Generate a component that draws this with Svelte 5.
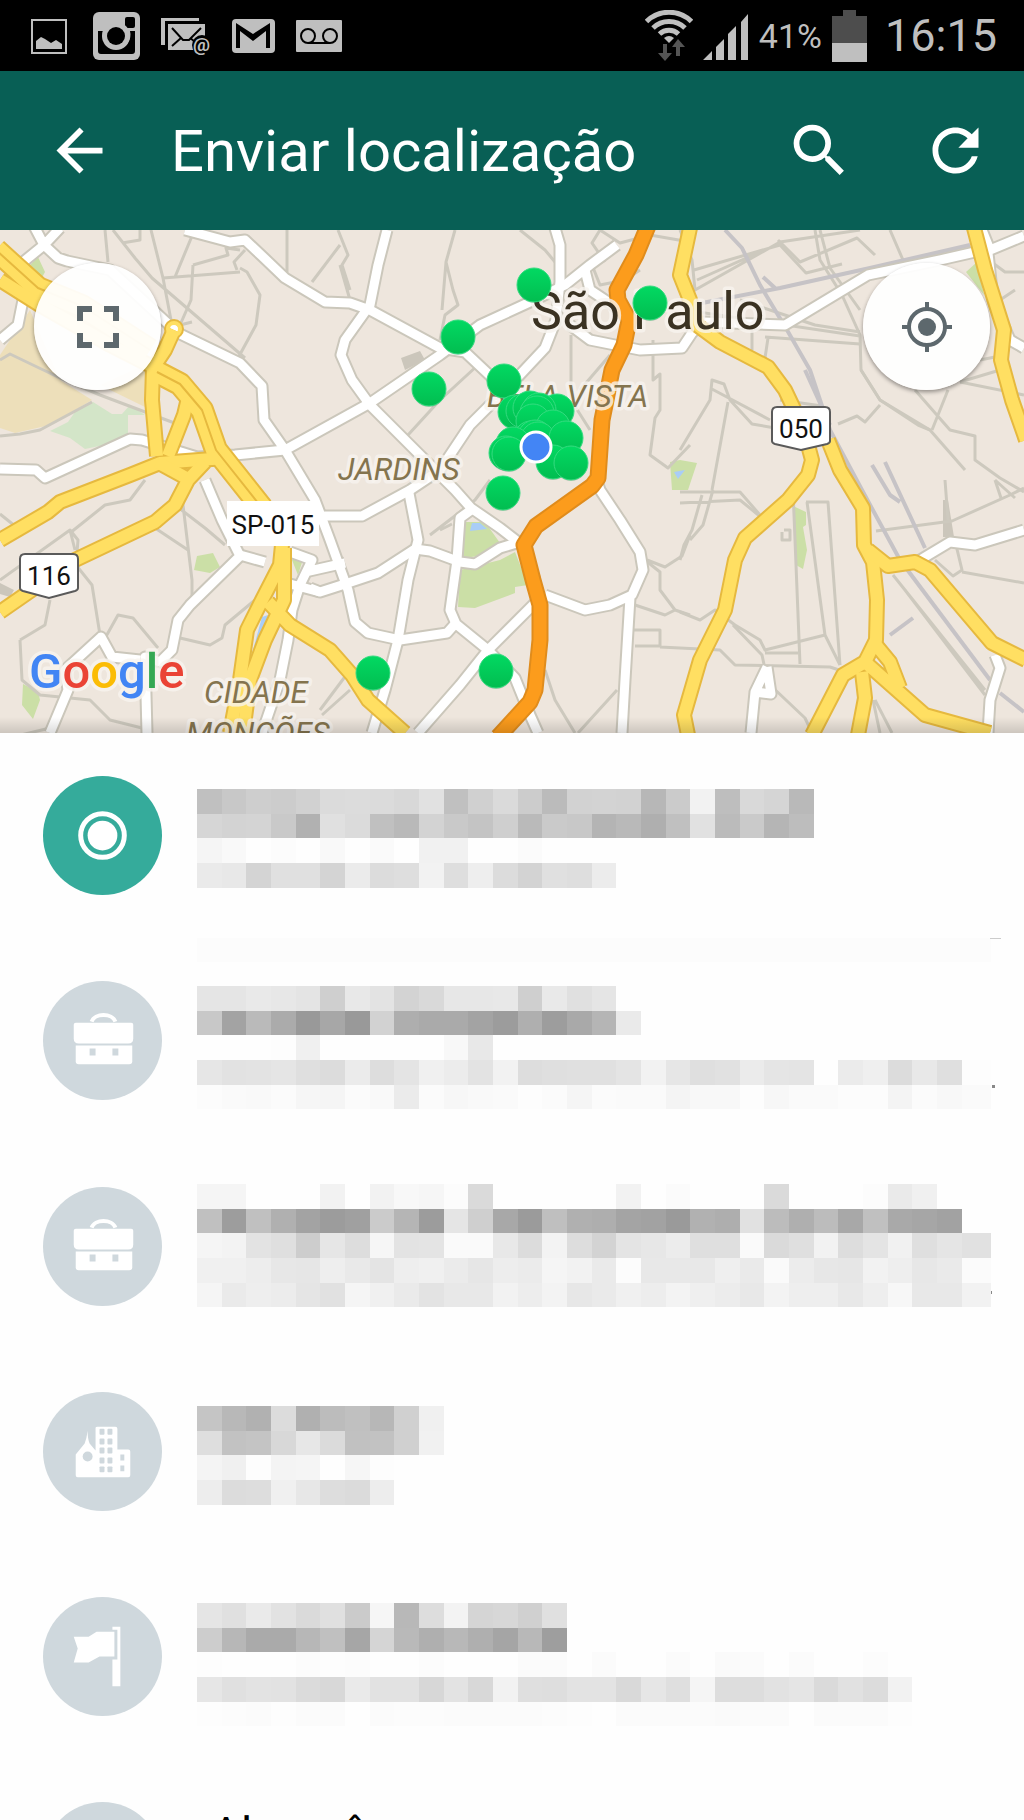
<script lang="ts">
  const CELL = 24.64;

  const minor = [
    "M105 230L108 262M113 230L135 258L152 278L245 358M122 243L140 240V230M151 230L163 278L171 320",
    "M192 236L175 277M163 278L240 272M193 265L228 255L226 248L240 250M193 265L191 300L180 325",
    "M240 268L247 272L260 295L256 325L238 358M245 250L234 262L237 270M180 325L192 322M287 230V272",
    "M338 230L348 255L342 265L350 290M312 282L340 245M340 265L350 300",
    "M455 230L446 262L453 290L458 305L445 315L440 340M446 262L442 310",
    "M478 365L440 400L408 435M340 515L300 535",
    "M520 230L545 250L555 262M600 230L620 243L650 235L690 242",
    "M590 260L600 285L625 280L640 270M600 230L592 243L605 262",
    "M571 335V400L590 430M610 355L580 390M653 340V380L660 374V410L655 418L650 455L668 468L690 445",
    "M680 230L692 260L695 290L780 242L820 236L860 230M694 270L780 245L806 273L842 264M697 280L760 252",
    "M778 240L800 262L857 238L875 255M815 230L820 260L842 295L860 335L861 370L880 400L930 430L965 470",
    "M698 312L860 336M752 330V350M765 337L860 344M768 338L765 358",
    "M820 230L830 268L860 310M890 230L903 260M740 300L815 325L860 332",
    "M680 450L710 400L712 380L724 384L730 400L752 424L775 428M710 388L770 420M728 402L712 490",
    "M780 400L822 406M838 424L857 416L865 422L880 405M861 370L880 400L918 425L930 430M960 382L1024 395",
    "M915 390L950 430L975 436V460L1000 478L1024 492M948 390L932 430M975 436V460",
    "M986 258L1005 272L1024 272M1015 290L1000 300M960 382L1000 370M980 360L1005 355",
    "M0 514L20 530M0 580L70 530L75 550M70 530L78 540L76 565L92 585L100 635",
    "M70 533L105 505L130 500L145 480M180 480L192 580L192 600M175 505L205 528L225 545M155 528L188 550",
    "M20 640L45 625L50 600M20 640L22 680L40 695L90 700L110 720L150 730",
    "M104 640L118 615L133 618L158 648M180 638L210 645L222 638L225 625L255 600M0 740L50 728",
    "M430 535L460 512L475 500L490 480M440 530L452 524",
    "M545 670L555 700L575 733M578 733L617 690M647 560L665 567L682 556L690 535M645 560L660 572V590L675 610L690 615M635 605L665 615L675 610",
    "M633 630H660V646H635M660 647L720 650L735 665L830 667L845 672M680 492L740 492L760 515",
    "M680 503L740 500L762 518M702 495L692 530L684 545L680 560M713 490L703 525L690 540M793 490L800 664",
    "M806 502H828L840 665M807 502L825 635L840 665M784 530H790V540H782V532",
    "M680 612L700 620L715 610L735 625L760 640L765 650L825 635M733 625L762 655L768 683L805 718L812 733M765 653H798",
    "M876 531L952 521L1010 495L1024 488M945 480L948 520M995 480L1001 498M995 480L1015 498M935 560L953 576L962 570L956 545",
    "M962 572L1024 583M905 590L985 695M893 575L985 690M873 700L880 733M875 700L892 733M320 710L350 670M322 715L350 690",
  ];

  const rails = [
    "M725 230L742 248L760 285L787 330L810 370L830 430L862 490L900 560L990 680",
    "M697 304L780 288L870 268L970 245M763 277L775 288M805 370L830 425",
    "M872 465L890 495L900 502M885 462L925 548M890 635L913 618M1000 693L1024 712",
  ];

  const streets = [
    "M34 226L44 245L60 228M44 245L58 258L67 261L110 270L165 321L178 333L240 363L262 386L264 420L285 450L315 500L330 540L348 590L355 622L368 633L400 640L447 633L455 624",
    "M44 245L17 267L23 300L18 325L0 340",
    "M185 230L230 242L245 240L262 256L285 278L325 302L350 303L370 310L440 348L465 352L500 385",
    "M387 230L378 265L370 305L345 340L341 355L352 380L370 405L455 490L471 508L500 528L522 545",
    "M0 469L36 470L45 478L130 439L142 440L197 457L235 455L285 450L370 403L440 355L480 325L530 302L565 285L590 265L617 245",
    "M555 228L560 245V282L556 320L545 348L515 380L470 425L440 470L410 490L362 516H325L315 522",
    "M585 270L590 290L620 310M570 325L590 340L640 350L682 348L692 333L703 322L785 325L868 275L940 260L975 252",
    "M1024 236L990 250L982 230M988 253L993 300L1010 340L1024 348",
    "M408 488L418 540L408 580L398 640L385 690L372 733",
    "M310 588L320 592L345 584L378 573L415 549L430 551L460 562L475 564L500 548L520 542",
    "M471 510L460 518L457 560L450 610L456 624L488 650L515 678L530 715L538 733",
    "M538 600L488 650L460 685L418 733M522 545L535 580",
    "M545 595L585 610L610 605L632 595L643 570L640 552L620 520L600 490L595 475M630 597L625 680L622 733",
    "M205 480L222 520L240 556L190 605L178 620L172 650L160 662L145 657L147 733M140 660L112 657L101 637L65 670L68 690L50 733",
    "M240 555L265 562M290 552L312 560L300 585L292 610L288 640L280 680L262 733M305 572L345 563M275 580L320 592",
    "M920 560L950 542L975 545L1024 530M767 667L755 692L751 733M767 667L771 694L755 692M995 655L1000 668L990 700L988 733",
  ];

  const trunks = [
    "M-4 250L38 288L82 306L150 350",
    "M157 372L180 384L202 410L216 450L262 508",
  ];

  const highways = [
    "M0 280L38 304L110 345L155 368L180 380",
    "M174 330L165 350L153 368L152 400L157 456",
    "M188 398L184 415L168 456",
    "M225 458L160 463L130 475L60 502L48 512L0 540",
    "M157 462L190 480M205 462L188 480L175 505L155 522L75 560L0 612",
    "M282 545L280 565L262 600L247 630L240 680L230 733",
    "M284 548L284 600L265 640L250 680L243 733M268 602L290 625L330 650L352 675L368 700L405 733",
    "M690 228L680 275L690 300L697 325L720 342L768 367L785 390L804 430L812 460L808 475L788 500L745 538L735 560L725 610L700 660L684 715L688 735",
    "M828 440L840 470L863 508L864 545L873 562L877 600L876 640L865 662L843 675L812 735",
    "M868 550L888 566L915 562L930 570L992 643L1026 660",
    "M876 645L890 662L900 688M865 662L925 715L990 733M862 672L865 698L858 735",
    "M974 228L985 270L1004 330L1001 360L1012 400L1026 440",
  ];

  const orange =
    "M648 226L636 255L617 290L618 300L629 320L624 345L612 370L602 420L598 478L592 486L536 526L524 545L533 580L540 605L540 640L535 690L530 702L498 737";

  const pins = [
    [534, 285], [650, 303], [458, 337], [429, 389], [504, 381],
    [503, 493], [373, 673], [496, 671],
    [515, 412], [523, 411], [530, 408], [557, 411], [539, 410], [537, 413], [533, 421],
    [553, 427], [531, 438], [535, 437], [538, 439], [566, 438], [513, 444],
    [506, 453], [509, 454], [553, 462], [571, 463],
  ];

  const windows = [-23, -13, -4, 6, 15];

  // Each row of the preview is a list of grey levels, one per block
  const places = [
    {
      icon: "current",
      top: 56,
      rows: [
        "c0 c8 ce cc d1 db dc db d8 e1 c0 d0 da cc bb d2 d3 d2 b7 cb f2 be d9 d5 b9",
        "d6 d3 d4 c9 b1 e0 db c0 b9 d3 c9 c4 cf ba ca c8 b4 b9 af c0 e1 bb ca b5 bd",
        "f5 f9 fe fc fe f9 fe fa fe f1 f1 fe fe fb",
        "ea e8 d4 e0 e0 d4 eb dc de f2 de ee dc d3 e0 de ec",
      ],
    },
    {
      icon: "case",
      top: 48,
      rows: [
        "e5 e5 e9 e7 e4 cf e8 e3 d3 d9 e7 e7 e8 cf e9 e0 e5",
        "c8 a3 ba ab 99 a7 99 d2 ae aa aa a3 9c af 9d a9 b5 ea",
        "fe fe fe fd f0 fe fe fe fe fe f8 e8 fe",
        "e6 e2 e3 e5 df dc eb dd e4 f0 ec e3 f2 dd df e0 e0 e4 f2 e6 df e1 eb e5 e4 fe eb ef dc e8 df fd",
        "fc fa f9 fb f6 f5 fb f9 eb fb f7 f9 fa fd fb f5 fb fa fa f4 f8 f8 fd f7 fa fa fc fc f4 fb f8 fa",
      ],
    },
    {
      icon: "case",
      top: 40,
      rows: [
        "f5 f5 fe fe fe f2 fe f2 f8 f6 fc da fe fe fe fe fe f2 fe fb fe fe fe da fe fe fe fc ea f0",
        "c0 9d c0 b0 a3 9c a0 cb b5 9c e5 cf a8 9b bf b0 ae a4 a2 9a b1 ae e1 bc af bc a8 c0 a9 a6 a2",
        "f5 f3 e3 df cd e6 dd f6 e3 e4 fa fa e8 dc f3 dd d3 e4 e7 ec df df fa da df f2 dd e4 f1 df e5 e1",
        "f0 f0 ed e7 e6 ee e9 e4 ee f0 eb e6 ed eb f5 f2 ea fc e8 e8 e8 ef ea fa ec e7 e6 f2 ee e7 ea fb",
        "f5 ea ee ec e5 e1 f5 f0 ea e3 e8 e8 f2 ed f3 e7 ea f0 ed f3 ef ec e8 f3 ee ee e8 ee f7 e8 e8 f2",
      ],
    },
    {
      icon: "city",
      top: 57,
      rows: [
        "c5 b8 b1 dc b0 bc c0 b7 d0 f0",
        "de c2 c4 d8 e7 db c1 c2 d0 f1",
        "f4 f0 fd f4 f5 fe f6 fd",
        "ed dc dd f0 e7 dd db ed",
      ],
    },
    {
      icon: "flag",
      top: 49,
      rows: [
        "e5 e0 ea e2 da e0 cb f6 b8 dd f3 d5 d7 d0 e0",
        "cd b7 aa aa b7 c0 a6 d5 b9 af b8 af a5 b8 9e",
        "fd fe fe fe fc fd fc fe fe fc fe fe fe fb fb fe fb fe fe fb fe fa fb fe fb fe fe fc",
        "e6 e0 e3 e2 db d8 ea e2 e2 d7 e3 d8 f2 df de e3 e3 d9 e6 df f5 dd dd e2 e5 da e1 dc f2",
        "fd fc fb fd fb fb fe fb fc fc fb fb fb fb fc fd fe fb fb fb fb fa fb fb fe fb fb fb fd",
      ],
    },
    { icon: "none", title: "Alaranê" },
  ];
</script>

<div class="screen">
  <div class="status">
    <svg width="41" height="48" viewBox="31 12 41 48">
      <rect x="32" y="20" width="34" height="33" fill="none" stroke="#bfbfbf" stroke-width="2" />
      <path fill="#bfbfbf" d="M36 49V41L41 37L45 39L51 43L56 40L62 44V49Z" />
    </svg>
    <svg width="47" height="48" viewBox="94 13 47 48">
      <rect x="94" y="13" width="47" height="48" rx="6" fill="#bfbfbf" />
      <rect x="126" y="18" width="10" height="11" rx="2" />
      <path d="M99 32H104A14 14 0 1 0 131 32H136V52Q136 55 133 55H102Q99 55 99 52Z" />
      <circle cx="117" cy="37" r="14" fill="#bfbfbf" />
      <path fill="#bfbfbf" d="M100 22H124V32H100Z" />
      <circle cx="117" cy="37" r="9" />
    </svg>
    <svg width="50" height="48" viewBox="161 12 50 48">
      <path fill="#bfbfbf" d="M161 18H199V21H165V45H161Z" />
      <path fill="#bfbfbf" d="M168 24H205V37L193 50H168Z" />
      <path fill="none" stroke="#000" stroke-width="2" d="M172 28L183 40H189L201 28M172 46L181 38M194 41L190 38" />
      <circle cx="202" cy="45" r="10" />
      <text x="193" y="51" font-size="19" font-weight="700" fill="#bfbfbf">@</text>
    </svg>
    <svg width="43" height="48" viewBox="233 13 43 48">
      <rect x="233" y="20" width="43" height="34" rx="4" fill="#bfbfbf" />
      <path d="M237 49V24L254 35L271 24V49H267V32L254 42L241 32V49Z" />
    </svg>
    <svg width="46" height="48" viewBox="299 12 46 48">
      <rect x="299" y="20" width="46" height="32" rx="1" fill="#bfbfbf" />
      <g fill="none" stroke="#000" stroke-width="2">
        <circle cx="311" cy="36" r="7" />
        <circle cx="333" cy="36" r="7" />
        <path d="M311 43H333" />
      </g>
    </svg>
    <div class="system">
      <svg width="48" height="52" viewBox="644 10 48 52">
        <g fill="none" stroke="#bfbfbf" stroke-width="5">
          <path d="M645.500 21.500A32 32 0 0 1 690.500 21.500" />
          <path d="M652 28A23 23 0 0 1 684 28" />
          <path d="M658.500 34A14 14 0 0 1 677.500 34" />
        </g>
        <path fill="#bfbfbf" d="M663 38Q668 34 673 38L668 43Z" />
        <path fill="#555" d="M662 44H666V53H671L664 61L657 53H662ZM675 56V47H671L677 39L684 47H679V56Z" />
      </svg>
      <svg width="46" height="52" viewBox="702 9 46 52" fill="#bfbfbf">
        <path d="M702 59L711 50V59ZM715 59V46L723 38V59ZM727 59V33L735 25V59ZM740 59V21L747 13V59Z" />
      </svg>
      <span class="percent">41%</span>
      <svg width="35" height="52" viewBox="832 9 35 52">
        <path fill="#4d4d4d" d="M832 15H843V9H856V15H867V42H832Z" />
        <path fill="#bfbfbf" d="M832 42H867V61H832Z" />
      </svg>
      <span class="clock">16:15</span>
    </div>
  </div>

  <header>
    <button class="tool" aria-label="Voltar">
      <svg viewBox="0 0 24 24"><path d="M20 11H7.83l5.59-5.59L12 4l-8 8 8 8 1.41-1.41L7.83 13H20v-2z" /></svg>
    </button>
    <h1>Enviar localização</h1>
    <button class="tool" aria-label="Pesquisar">
      <svg viewBox="0 0 24 24">
        <path d="M15.5 14h-.79l-.28-.27A6.471 6.471 0 0 0 16 9.500 6.500 6.500 0 1 0 9.500 16c1.610 0 3.090-.59 4.230-1.570l.27.28v.79l5 4.990L20.490 19l-4.990-5zm-6 0C7.010 14 5 11.990 5 9.500S7.010 5 9.500 5 14 7.010 14 9.500 11.990 14 9.500 14z" />
      </svg>
    </button>
    <button class="tool" aria-label="Atualizar">
      <svg viewBox="0 0 24 24">
        <path d="M17.65 6.35C16.2 4.9 14.21 4 12 4c-4.42 0-7.99 3.58-7.99 8s3.57 8 7.99 8c3.73 0 6.84-2.55 7.73-6h-2.08c-.82 2.33-3.04 4-5.65 4-3.31 0-6-2.69-6-6s2.69-6 6-6c1.66 0 3.14.69 4.22 1.78L13 11h7V4l-2.35 2.35z" />
      </svg>
    </button>
  </header>

  <section class="map">
    <svg class="canvas" viewBox="0 230 1024 503">
      <defs>
        <linearGradient id="pin" x1="0" y1="0" x2="0" y2="1">
          <stop offset="0" stop-color="#02d962" />
          <stop offset="1" stop-color="#02bd50" />
        </linearGradient>
        <linearGradient id="edge" x1="0" y1="0" x2="0" y2="1">
          <stop offset="0" stop-color="#000" stop-opacity="0" />
          <stop offset="1" stop-color="#000" stop-opacity="0.14" />
        </linearGradient>
      </defs>
      <rect y="230" width="1024" height="503" fill="#eee6dd" />
      <path fill="#eddfba" d="M30 310L60 380L92 400L50 425L15 433L0 428V355Z M100 385L150 362L147 408Z" />
      <path fill="#d3e5c8" d="M50 431L68 422L75 412L93 402L112 414H122L130 405L145 415H128V440L85 449L70 438Z" />
      <g fill="#cbdfa6">
        <path d="M27 268L38 257L45 272L40 281L28 277Z M197 556L213 553L220 567L210 573L194 570Z M23 684L38 692L40 700L33 719L22 705Z" />
        <path d="M464 522L485 522L500 543L480 556L462 558Z M460 570L500 560L515 552L528 585L515 587V593L475 608L458 607Z" />
        <path d="M670 462L680 460L697 463L688 490H672Z M793 506L806 512V525L803 527L807 550L803 569L796 565Z M966 272L977 262L984 295Z M292 560L304 556L298 575Z" />
      </g>
      <path fill="#a9cdf7" d="M472 523H480L487 529L470 531ZM674 472L685 470L678 479ZM262 617L268 615L256 650H253Z" />
      <path fill="#cbc6bb" d="M401 358L420 351L425 360L405 370ZM943 500H948L954 537H943ZM0 583L14 590L10 597L0 594Z" />
      <g class="lines minor">
        {#each minor as d}<path {d} />{/each}
        <path d="M0 360L10 354L60 378L100 395L185 427M0 436L20 434L40 430L92 402" />
      </g>
      <g class="lines rail">
        {#each rails as d}<path {d} />{/each}
      </g>
      <g class="lines street-case">
        {#each streets as d}<path {d} />{/each}
      </g>
      <g class="lines street">
        {#each streets as d}<path {d} />{/each}
      </g>
      <g class="lines trunk-case">
        {#each trunks as d}<path {d} />{/each}
      </g>
      <g class="lines highway-case">
        {#each highways as d}<path {d} />{/each}
        <circle cx="174" cy="329" r="2" />
      </g>
      <g class="lines trunk">
        {#each trunks as d}<path {d} />{/each}
      </g>
      <g class="lines highway">
        {#each highways as d}<path {d} />{/each}
        <circle cx="174" cy="329" r="2" />
      </g>
      <g class="lines lane">
        {#each trunks as d}<path {d} />{/each}
      </g>
      <path class="lines orange-case" d={orange} />
      <path class="lines orange" d={orange} />

      <text class="city" x="531" y="329">São Paulo</text>
      <text class="area" x="487" y="407">BELA VISTA</text>
      <text class="area" x="338" y="480">JARDINS</text>
      <text class="area" x="204" y="703">CIDADE</text>
      <text class="area" x="186" y="744">MONÇÕES</text>

      <rect x="227" y="501" width="92" height="45" fill="#fff" />
      <text class="road" x="273" y="534">SP-015</text>
      <g fill="#fff" stroke="#5a5a5a" stroke-width="2">
        <path d="M25 554H73Q78 554 78 559V588Q78 590 75 591L49 598L23 591Q20 590 20 588V559Q20 554 25 554Z" />
        <path d="M777 407H825Q830 407 830 412V441Q830 443 827 444L801 450L775 444Q772 443 772 441V412Q772 407 777 407Z" />
      </g>
      <text class="road" x="49" y="585">116</text>
      <text class="road" x="801" y="438">050</text>

      {#each pins as [x, y]}
        <circle cx={x} cy={y + 1} r="17" fill="#00000022" />
        <circle cx={x} cy={y} r="17" fill="url(#pin)" stroke="#35dc80" stroke-width="1" />
      {/each}
      <circle cx="536" cy="447" r="15" fill="#4385f5" stroke="#fff" stroke-width="3" />

      <text class="google" x="29" y="688"
        ><tspan fill="#4285f4">G</tspan><tspan fill="#ea4335">o</tspan><tspan fill="#fbbc05">o</tspan><tspan
          fill="#4285f4">g</tspan
        ><tspan fill="#34a853">l</tspan><tspan fill="#ea4335">e</tspan></text
      >
      <rect y="717" width="1024" height="16" fill="url(#edge)" />
    </svg>
    <div class="controls">
      <button aria-label="Tela cheia">
        <svg width="44" height="44" viewBox="0 0 44 44" fill="none" stroke="#5d686d" stroke-width="6">
          <path d="M4 16V4H16M28 4H40V16M40 28V40H28M16 40H4V28" />
        </svg>
      </button>
      <button aria-label="Minha localização">
        <svg width="50" height="50" viewBox="0 0 50 50" fill="none" stroke="#5d686d" stroke-width="4">
          <circle cx="25" cy="25" r="18" />
          <circle cx="25" cy="25" r="9" fill="#5d686d" stroke="none" />
          <path d="M25 0V7M25 43V50M0 25H7M43 25H50" />
        </svg>
      </button>
    </div>
  </section>

  <ul>
    {#each places as place, n}
      <li>
        <button class="place" aria-label={place.title ?? `Local ${n + 1}`}>
          <svg class="badge" viewBox="-60 -60 120 120">
            <circle r="60" fill={place.icon === "current" ? "#35ab9b" : "#cfd8dd"} />
            {#if place.icon === "current"}
              <circle r="22" fill="none" stroke="#fff" stroke-width="5" />
              <circle r="15" fill="#fff" />
            {:else if place.icon === "case"}
              <path fill="none" stroke="#fff" stroke-width="4" d="M-11 -19C-8 -28 10 -28 13 -19" />
              <path fill="#fff" d="M-27 -18H29Q31 -18 31 -16V-2Q31 3 26 3H-24Q-29 3 -29 -2V-16Q-29 -18 -27 -18Z" />
              <path fill="#fff" d="M-27 5H30V21Q30 24 27 24H-24Q-27 24 -27 21Z" />
              <path fill="#cfd8dd" d="M-13 8H-7V15H-13ZM10 8H16V15H10Z" />
            {:else if place.icon === "city"}
              <path fill="#fff" d="M-27 3L-18 -8Q-16 -13 -15 -21Q-15 -13 -13 -8L-7 -1V-24Q-7 -25 -5 -25H13Q15 -25 15 -23V-2H26Q28 -2 28 0V24Q28 26 26 26H-25Q-27 26 -27 24Z" />
              <circle cx="-15" cy="5" r="5" fill="#cfd8dd" />
              {#each windows as y}
                <rect x="-3" {y} width="5" height="6" rx="1" fill="#cfd8dd" />
                <rect x="5" {y} width="5" height="6" rx="1" fill="#cfd8dd" />
              {/each}
              <path fill="#cfd8dd" d="M18 3H22V9H18ZM18 14H22V20H18Z" />
            {:else if place.icon === "flag"}
              <path fill="#fff" d="M-6 -25H12V0H-3L-14 6H-29L-25 -8L-29 -20H-14Z" />
              <path fill="#fff" d="M10 -30H18V30H10V3H15V-27H10Z" />
            {/if}
          </svg>
          {#if place.rows}
            <svg class="preview" viewBox="0 0 803 205" shape-rendering="crispEdges">
              {#if n === 1}
                <rect width="793" height="24" fill="#fcfcfc" />
                <rect x="792" width="11" height="1" fill="#ccc" />
                <rect x="794" y="147" width="3" height="3" fill="#888" />
              {:else if n === 2}
                <rect x="793" y="147" width="1" height="3" fill="#888" />
              {/if}
              {#each place.rows as row, r}
                {#each row.split(" ") as level, c}
                  <rect
                    x={c * CELL}
                    y={place.top + r * CELL}
                    width={c === 31 ? 29 : CELL}
                    height={CELL}
                    fill="#{level}{level}{level}"
                  />
                {/each}
              {/each}
            </svg>
          {:else}
            <span class="name">{place.title}</span>
          {/if}
        </button>
      </li>
    {/each}
  </ul>
</div>

<style>
  :global(body) {
    margin: 0;
    background: #fefefe;
  }

  .screen {
    height: 100vh;
    overflow: hidden;
    font-family: Roboto, "Noto Sans", sans-serif;
    color: #000;
  }

  button {
    border: 0;
    padding: 0;
    background: none;
    font: inherit;
    color: inherit;
    cursor: pointer;
  }

  svg { display: block; }

  /* Status bar */
  .status {
    display: flex;
    align-items: center;
    gap: 21px;
    height: 71px;
    padding: 0 27px 0 31px;
    background: #000;
    color: #bfbfbf;
  }

  .system {
    display: flex;
    align-items: center;
    gap: 10px;
    margin-left: auto;
  }

  .percent { font-size: 34px; }

  .clock {
    margin-left: 8px;
    font-size: 45px;
  }

  /* App bar */
  header {
    display: flex;
    align-items: center;
    gap: 67px;
    height: 159px;
    padding: 0 34px 0 45px;
    background: #085f55;
    color: #fff;
  }

  h1 {
    flex: 1;
    margin: 0 0 0 -10px;
    font-size: 58px;
    font-weight: 400;
    white-space: nowrap;
  }

  .tool svg {
    width: 69px;
    height: 69px;
    fill: currentColor;
  }

  /* Map */
  .map { position: relative; }

  .canvas {
    width: 100%;
    height: auto;
  }

  .lines {
    fill: none;
    stroke-linejoin: round;
  }

  .minor {
    stroke: #cdc9be;
    stroke-width: 3;
  }

  .rail {
    stroke: #c6c3c6;
    stroke-width: 4;
  }

  .street-case {
    stroke: #cbc7bb;
    stroke-width: 13;
  }

  .street {
    stroke: #fff;
    stroke-width: 9;
  }

  .trunk-case {
    stroke: #e6b93f;
    stroke-width: 24;
  }

  .trunk {
    stroke: #ffdf62;
    stroke-width: 20;
  }

  .lane {
    stroke: #e6b93f;
    stroke-width: 2;
  }

  .highway-case {
    stroke: #e6b93f;
    stroke-width: 16;
  }

  .highway {
    stroke: #ffdf62;
    stroke-width: 12;
  }

  .orange-case {
    stroke: #e08c1c;
    stroke-width: 17;
  }

  .orange {
    stroke: #fc9c1c;
    stroke-width: 13;
  }

  .city, .area, .google {
    paint-order: stroke;
    stroke: #f8f4efcc;
    stroke-width: 7;
    stroke-linejoin: round;
  }

  .city {
    font-size: 52px;
    fill: #3a3222;
  }

  .area {
    font-size: 31px;
    font-style: italic;
    fill: #84744e;
  }

  .road {
    font-size: 26px;
    text-anchor: middle;
    fill: #111;
  }

  .google {
    font-size: 49px;
    font-weight: 500;
  }

  .controls {
    position: absolute;
    inset: 33px 34px auto;
    display: flex;
    justify-content: space-between;
  }

  .controls button {
    display: grid;
    place-items: center;
    width: 127px;
    height: 127px;
    border-radius: 50%;
    background: #fffffff0;
    box-shadow: 0 2px 4px #0006;
  }

  /* Places */
  ul {
    margin: 0;
    padding: 0;
    list-style: none;
  }

  .place {
    display: flex;
    align-items: center;
    gap: 35px;
    width: 100%;
    min-height: 205px;
    padding: 0 23px 0 43px;
    text-align: left;
  }

  .badge {
    flex: none;
    width: 119px;
    height: 119px;
  }

  .preview {
    flex: 1;
    min-width: 0;
    height: auto;
  }

  .name {
    align-self: flex-start;
    padding: 48px 14px 0;
    font-size: 46px;
    line-height: 54px;
  }
</style>
